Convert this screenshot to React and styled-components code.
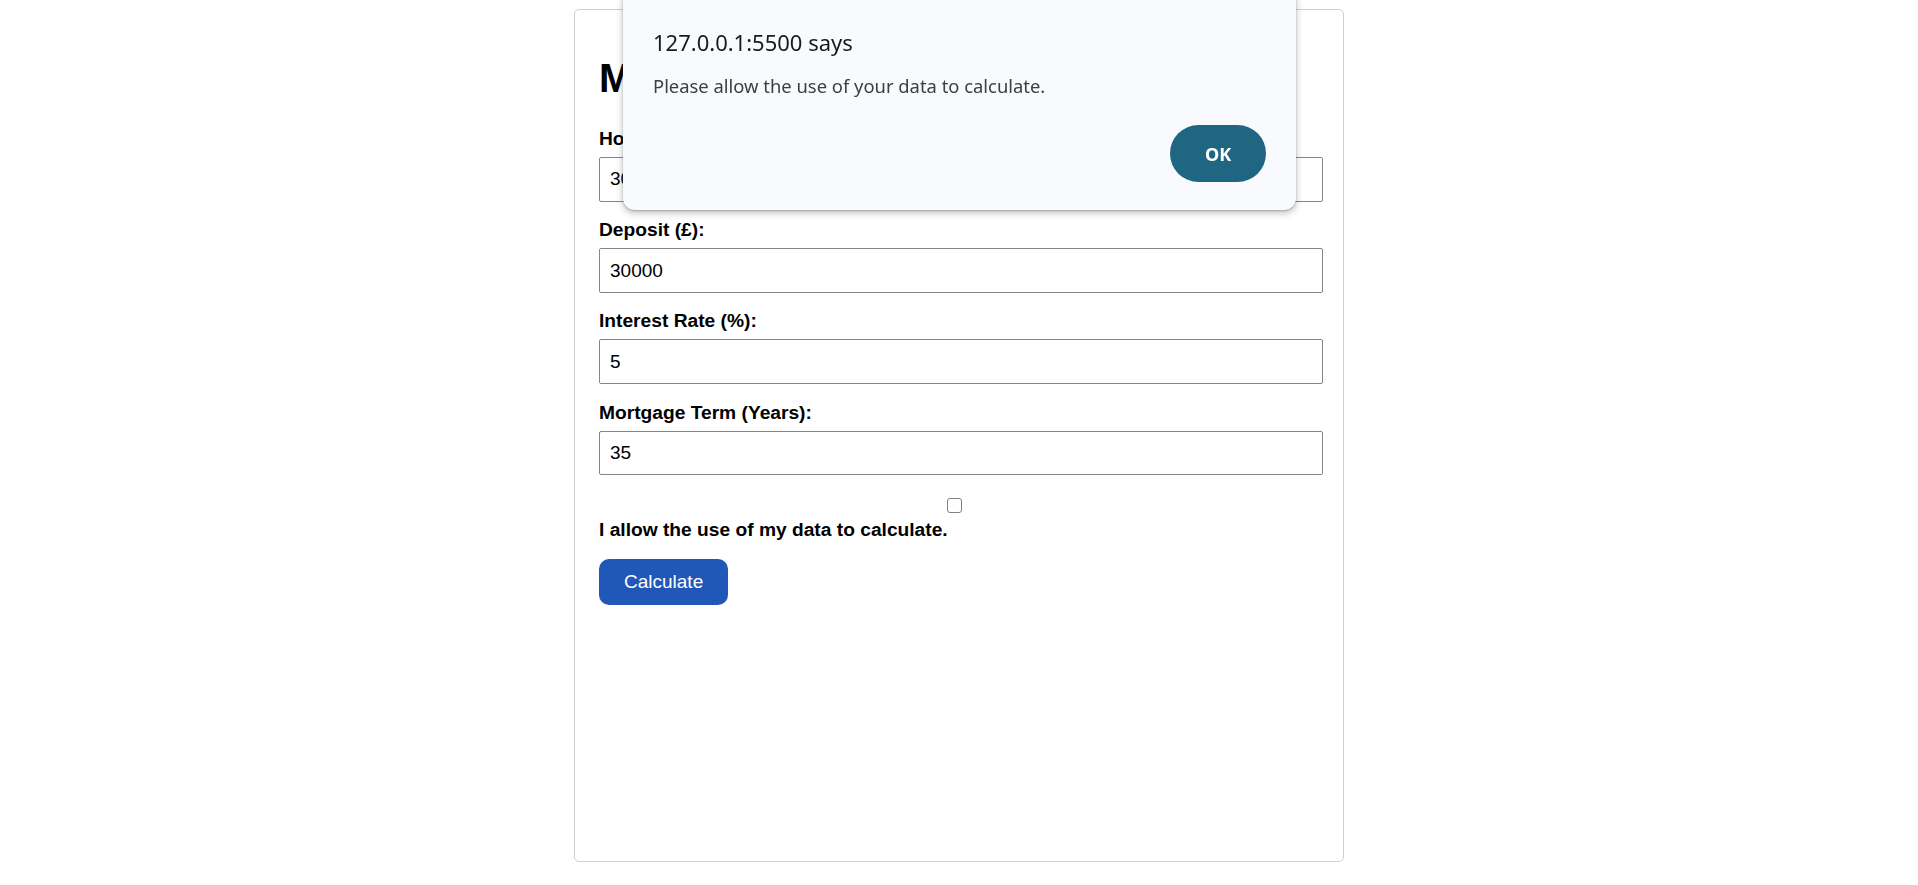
import React, { useState } from "react";
import styled, { createGlobalStyle } from "styled-components";

const GlobalStyle = createGlobalStyle`
  html, body {
    margin: 0;
    padding: 0;
    background: #ffffff;
  }
  body {
    font-family: "Liberation Sans", Arial, sans-serif;
    color: #000;
  }
  * { box-sizing: border-box; }
`;

const Page = styled.div`
  width: 100%;
  min-height: 885px;
  padding-top: 9px;
`;

const Card = styled.form`
  width: 770px;
  height: 853px;
  margin: 0 auto;
  border: 1px solid #cfcfcf;
  border-radius: 5px;
  padding: 19.5px 20px 0 24px;
  display: flex;
  flex-direction: column;
`;

const Title = styled.h1`
  font-size: 40px;
  font-weight: bold;
  margin: 26.8px 0;
  line-height: normal;
`;

const Field = styled.div`
  display: flex;
  flex-direction: column;
  margin-bottom: 17.7px;
`;

const Label = styled.label`
  display: block;
  font-size: 19.2px;
  font-weight: bold;
  line-height: normal;
  margin-bottom: ${(p) => (p.$tight ? "0" : "7px")};
`;

const Input = styled.input`
  width: 100%;
  height: 44.5px;
  padding: 10px;
  font-family: "Liberation Sans", Arial, sans-serif;
  font-size: 19px;
  color: #000;
  border: 1px solid #858585;
  border-radius: 2px;
  background: #fff;
  outline: none;
`;

const CheckRow = styled.div`
  display: flex;
  justify-content: center;
  padding-right: 13px;
  margin-top: 5px;
  margin-bottom: 6px;
`;

const Check = styled.input`
  appearance: none;
  -webkit-appearance: none;
  width: 15.5px;
  height: 15.5px;
  margin: 0;
  border: 1.5px solid #808080;
  border-radius: 3px;
  background: #fff;
`;

const Submit = styled.button`
  align-self: flex-start;
  margin-top: 18px;
  padding: 0 25px;
  height: 45.5px;
  font-family: "Liberation Sans", Arial, sans-serif;
  font-size: 19px;
  color: #fff;
  background: #2158b8;
  border: none;
  border-radius: 10px;
`;

const Dialog = styled.div`
  position: fixed;
  top: -12px;
  left: 623px;
  width: 673px;
  height: 222px;
  background: #f8fafd;
  border-radius: 12px;
  box-shadow: 0 3px 6px 1px rgba(60, 64, 67, 0.26), 0 1px 2px rgba(60, 64, 67, 0.3);
  padding: 39px 30px 28px 30px;
  display: flex;
  flex-direction: column;
  font-family: "Noto Sans", "Open Sans", sans-serif;
`;

const DialogTitle = styled.div`
  font-size: 22px;
  line-height: 30px;
  color: #1a1a1a;
`;

const DialogText = styled.div`
  margin-top: 17px;
  font-size: 18.4px;
  line-height: 24px;
  color: #3c4043;
`;

const DialogActions = styled.div`
  margin-top: auto;
  display: flex;
  justify-content: flex-end;
`;

const OkButton = styled.button`
  width: 96px;
  height: 57px;
  border: none;
  border-radius: 29px;
  background: #1f6683;
  color: #fff;
  font-family: "Noto Sans", "Open Sans", sans-serif;
  font-weight: bold;
  font-size: 18px;
`;

const fields = [
  { id: "price", label: "House Price (£):", value: "300000" },
  { id: "deposit", label: "Deposit (£):", value: "30000" },
  { id: "rate", label: "Interest Rate (%):", value: "5" },
  { id: "term", label: "Mortgage Term (Years):", value: "35" },
];

export default function App() {
  const [values, setValues] = useState(
    Object.fromEntries(fields.map((f) => [f.id, f.value]))
  );
  const [agree, setAgree] = useState(false);

  return (
    <>
      <GlobalStyle />
      <Page>
        <Card onSubmit={(e) => e.preventDefault()}>
          <Title>Mortgage Calculator</Title>
          {fields.map((f) => (
            <Field key={f.id}>
              <Label htmlFor={f.id}>{f.label}</Label>
              <Input
                id={f.id}
                type="number"
                value={values[f.id]}
                onChange={(e) => setValues({ ...values, [f.id]: e.target.value })}
              />
            </Field>
          ))}
          <CheckRow>
            <Check
              id="consent"
              type="checkbox"
              checked={agree}
              onChange={(e) => setAgree(e.target.checked)}
            />
          </CheckRow>
          <Label htmlFor="consent" $tight>
            I allow the use of my data to calculate.
          </Label>
          <Submit type="submit">Calculate</Submit>
        </Card>
      </Page>
      <Dialog role="alertdialog">
        <DialogTitle>127.0.0.1:5500 says</DialogTitle>
        <DialogText>Please allow the use of your data to calculate.</DialogText>
        <DialogActions>
          <OkButton type="button">OK</OkButton>
        </DialogActions>
      </Dialog>
    </>
  );
}
